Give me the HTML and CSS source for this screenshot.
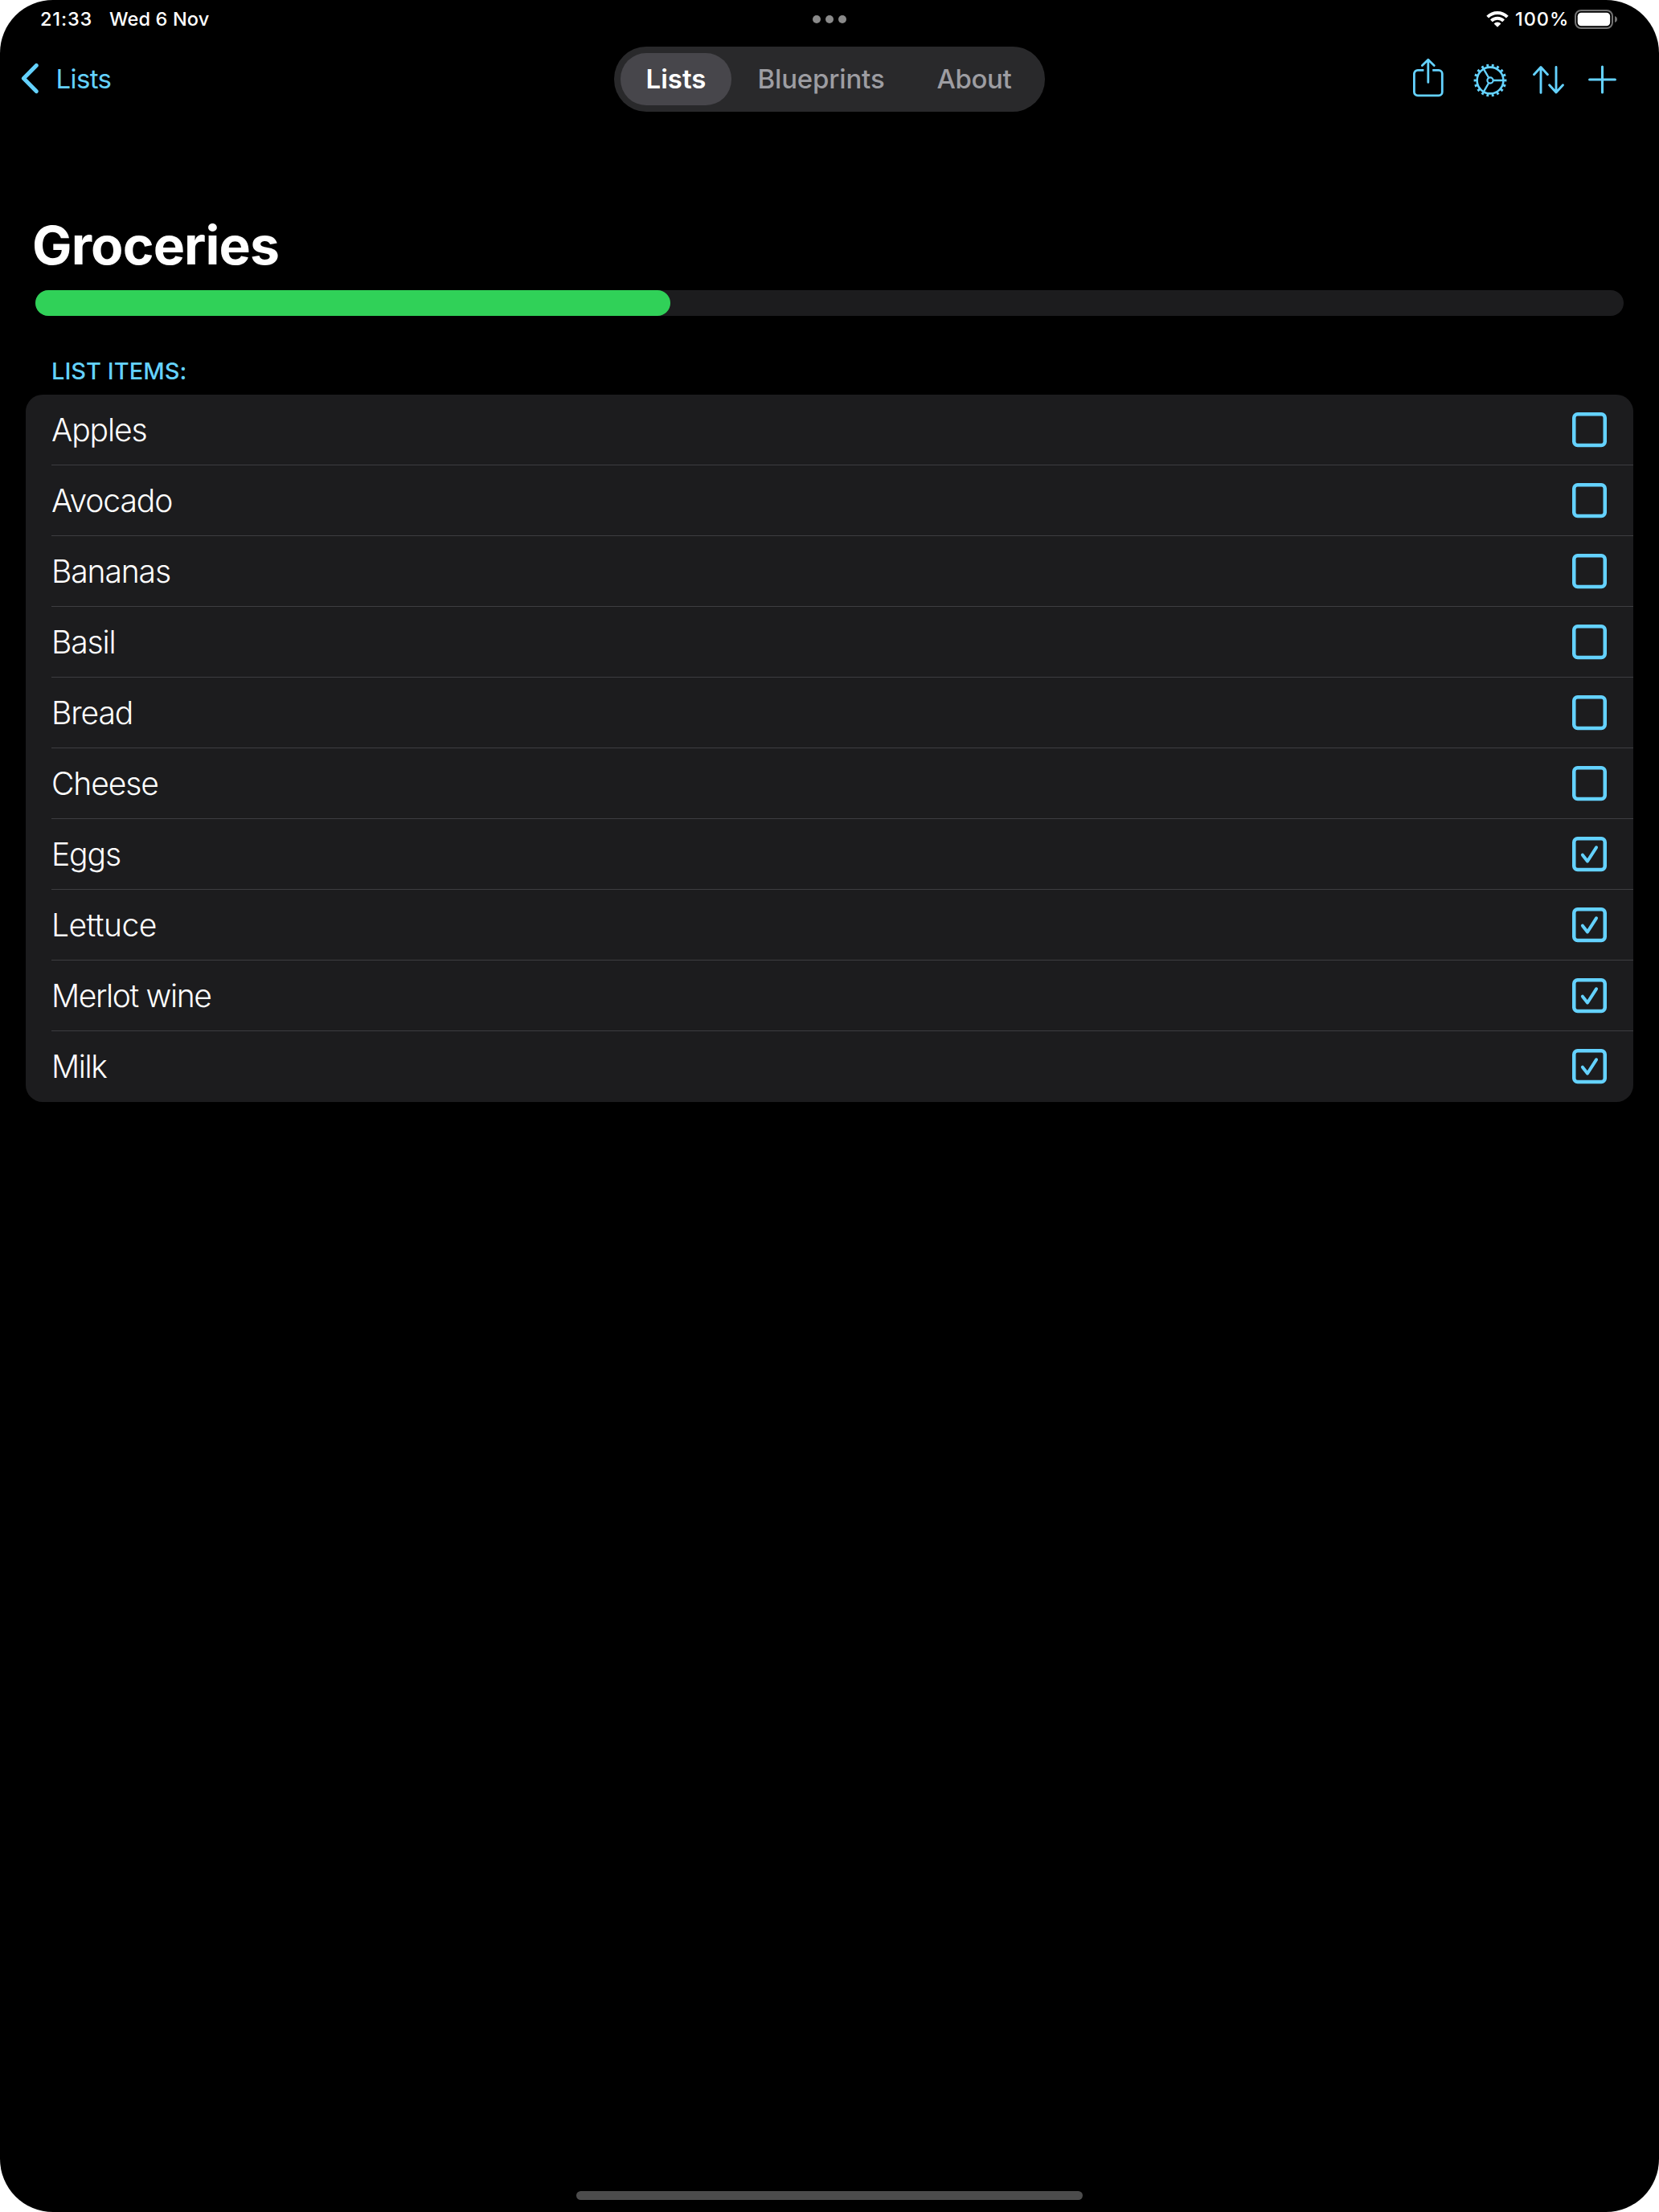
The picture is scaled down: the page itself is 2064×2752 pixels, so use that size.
FILE: index.html
```
<!DOCTYPE html>
<html lang="en">
<head>
<meta charset="utf-8">
<title>Groceries</title>
<link rel="stylesheet" href="styles.css">
</head>
<body>
<svg class="defs" width="0" height="0" aria-hidden="true">
  <symbol id="box" viewBox="0 0 44 44">
    <rect x="2.25" y="2.25" width="38.5" height="38.8" rx="4.5" fill="none" stroke="currentColor" stroke-width="4.5"/>
  </symbol>
  <symbol id="box-checked" viewBox="0 0 44 44">
    <rect x="2.25" y="2.25" width="38.5" height="38.8" rx="4.5" fill="none" stroke="currentColor" stroke-width="4.5"/>
    <path d="M12.9 22.7L19 30.5L30 13.3" fill="none" stroke="currentColor" stroke-width="4" stroke-linecap="round" stroke-linejoin="round"/>
  </symbol>
</svg>
<div class="screen">
  <header class="status">
    <div class="status-left"><span class="time">21:33</span><span class="date">Wed 6 Nov</span></div>
    <div class="dots"><i></i><i></i><i></i></div>
    <div class="status-right">
      <svg class="wifi" width="28" height="22" viewBox="0 0 28 22">
        <g fill="none" stroke="#fff">
          <path d="M1.7 8.2A17.4 17.4 0 0 1 26.3 8.2" stroke-width="4"/>
          <path d="M6.4 12.9A10.8 10.8 0 0 1 21.6 12.9" stroke-width="3.9"/>
        </g>
        <path d="M14 20.7L9.6 16.4A6.2 6.2 0 0 1 18.4 16.4Z" fill="#fff"/>
      </svg>
      <span class="percent">100%</span>
      <svg class="battery" width="54" height="24" viewBox="0 0 54 24">
        <rect x="1" y="1" width="46" height="22" rx="7" fill="none" stroke="#747474" stroke-width="2"/>
        <rect x="3.7" y="3.7" width="40.5" height="16.6" rx="4.5" fill="#fff"/>
        <path d="M50 8Q53 9.2 53 12T50 16Z" fill="#747474"/>
      </svg>
    </div>
  </header>

  <nav class="navbar">
    <a class="back">
      <svg width="24" height="40" viewBox="0 0 24 40"><path d="M20.2 3.4L4.4 19.5L20.2 35.6" fill="none" stroke="currentColor" stroke-width="5" stroke-linecap="round" stroke-linejoin="round"/></svg>
      <span>Lists</span>
    </a>
    <div class="tabs">
      <a class="tab active">Lists</a>
      <a class="tab blueprints">Blueprints</a>
      <a class="tab about">About</a>
    </div>
    <div class="actions">
      <svg class="share" width="40" height="50" viewBox="0 0 40 50" fill="none" stroke="currentColor" stroke-width="2.8" stroke-linecap="round" stroke-linejoin="round">
        <path d="M14.4 15.4H6.8A4.4 4.4 0 0 0 2.4 19.8V42.4A4.4 4.4 0 0 0 6.8 46.8H32.9A4.4 4.4 0 0 0 37.3 42.4V19.8A4.4 4.4 0 0 0 32.9 15.4H25.2" stroke-linecap="butt"/>
        <path d="M19.8 30.4V3M12.4 9.4L19.8 2.2L27.2 9.4"/>
      </svg>
      <svg class="gear" width="42" height="44" viewBox="0 0 42 44" fill="none" stroke="currentColor">
        <circle cx="21" cy="22" r="18.6" stroke-width="3.6" pathLength="180" stroke-dasharray="4.4 5.6" stroke-dashoffset="2.2"/>
        <circle cx="21" cy="22" r="16.4" stroke-width="2.6"/>
        <circle cx="21" cy="22" r="3.6" stroke-width="2.2"/>
        <path d="M25 22H37M19 18.5L13 8.1M19 25.5L13 35.9" stroke-width="2.4"/>
      </svg>
      <svg class="sort" width="40" height="38" viewBox="0 0 40 38" fill="none" stroke="currentColor" stroke-width="2.9" stroke-linecap="round" stroke-linejoin="round">
        <path d="M10 35.4V4M1.5 12.8L10 3.6L18.4 12.8"/>
        <path d="M29 3.4V35M20.6 25.8L29 35L37.5 25.8"/>
      </svg>
      <svg class="plus" width="36" height="36" viewBox="0 0 36 36" fill="none" stroke="currentColor" stroke-width="3.1" stroke-linecap="round"><path d="M1.6 18H33.4M17.5 2.1V33.9"/></svg>
    </div>
  </nav>

  <main>
    <h1>Groceries</h1>
    <div class="progress"><div class="progress-fill" style="width:40%"></div></div>
    <h2>LIST ITEMS:</h2>
    <ul class="list">
      <li><div class="row"><span>Apples</span><svg class="check"><use href="#box"/></svg></div></li>
      <li><div class="row"><span>Avocado</span><svg class="check"><use href="#box"/></svg></div></li>
      <li><div class="row"><span>Bananas</span><svg class="check"><use href="#box"/></svg></div></li>
      <li><div class="row"><span>Basil</span><svg class="check"><use href="#box"/></svg></div></li>
      <li><div class="row"><span>Bread</span><svg class="check"><use href="#box"/></svg></div></li>
      <li><div class="row"><span>Cheese</span><svg class="check"><use href="#box"/></svg></div></li>
      <li><div class="row"><span>Eggs</span><svg class="check"><use href="#box-checked"/></svg></div></li>
      <li><div class="row"><span class="loose">Lettuce</span><svg class="check"><use href="#box-checked"/></svg></div></li>
      <li><div class="row"><span class="tight">Merlot wine</span><svg class="check"><use href="#box-checked"/></svg></div></li>
      <li><div class="row"><span class="tight">Milk</span><svg class="check"><use href="#box-checked"/></svg></div></li>
    </ul>
  </main>
  <div class="home-indicator"></div>
</div>
</body>
</html>
```
FILE: styles.css
```
* { box-sizing: border-box; }
html, body { margin: 0; background: #fff; }
body { font-family: Inter, "Liberation Sans", sans-serif; color: #fff; }
svg { display: block; flex: none; }
.defs { position: absolute; }

.screen {
  width: 2064px;
  height: 2752px;
  background: #000;
  border-radius: 66px;
  overflow: hidden;
  display: flex;
  flex-direction: column;
}

.status {
  height: 48px;
  display: grid;
  grid-template-columns: 1fr auto 1fr;
  align-items: center;
  font-size: 23.5px;
  font-weight: 450;
  line-height: 48px;
}
.status-left { display: flex; padding-left: 50px; }
.time { width: 86px; letter-spacing: 0.85px; }
.date { letter-spacing: 0.15px; }
.dots { display: flex; gap: 6px; }
.dots i { width: 10px; height: 10px; border-radius: 50%; background: #8a8a8a; }
.status-right { display: flex; align-items: center; justify-content: flex-end; padding-right: 51px; }
.percent { width: 74px; margin-left: 8px; letter-spacing: 0.97px; }

.navbar {
  height: 81px;
  margin-top: 10px;
  display: grid;
  grid-template-columns: 1fr 536px 1fr;
  align-items: center;
  color: #64d2ff;
}
.back {
  display: flex;
  align-items: center;
  gap: 20.6px;
  padding: 0 0 1px 25px;
  font-size: 33px;
  line-height: 40px;
  letter-spacing: -0.64px;
}
.tabs {
  height: 81px;
  padding: 8px;
  display: flex;
  border-radius: 40px;
  background: #29292b;
  color: #9d9da2;
  font-size: 33px;
  font-weight: 500;
  line-height: 65px;
}
.tab { display: block; }
.tab.active {
  width: 138px;
  padding-left: 31.5px;
  border-radius: 32px;
  background: #47464b;
  color: #fff;
  font-weight: 600;
}
.blueprints { margin-left: 32.5px; width: 223px; letter-spacing: -0.17px; }
.about { letter-spacing: -0.4px; }

.actions { display: flex; align-items: center; justify-content: flex-end; padding-right: 52px; }
.share { margin-right: 36px; margin-bottom: 3px; }
.gear { margin-right: 32px; margin-top: 3px; }
.sort { margin-right: 29px; margin-top: 1px; }

main { padding: 0 32px; }
h1 {
  margin: 126px 0 0 8px;
  font-size: 66px;
  font-weight: 700;
  line-height: 80px;
  letter-spacing: -0.87px;
}
.progress {
  height: 32px;
  margin: 16px 12px 0;
  border-radius: 16px;
  background: #1c1c1e;
}
.progress-fill { height: 100%; border-radius: 16px; background: #30d158; }
h2 {
  margin: 48px 0 9px 32px;
  font-size: 29px;
  font-weight: 450;
  line-height: 41px;
  letter-spacing: 0.02px;
  color: #64d2ff;
}
.list {
  margin: 0;
  padding: 0 0 0 32px;
  list-style: none;
  border-radius: 21px;
  background: #1c1c1e;
}
.row {
  height: 88px;
  padding-right: 32px;
  display: flex;
  align-items: center;
  justify-content: space-between;
  border-bottom: 1px solid #3d3d41;
  font-size: 39px;
  font-weight: 300;
  letter-spacing: -1.1px;
}
li:last-child .row { border-bottom-color: transparent; }
.loose { letter-spacing: -0.5px; }
.tight { letter-spacing: -1.35px; }
.check { width: 44px; height: 44px; color: #64d2ff; }

.home-indicator {
  width: 630px;
  height: 11px;
  margin: auto auto 15px;
  border-radius: 6px;
  background: #4c4c4c;
}
```
